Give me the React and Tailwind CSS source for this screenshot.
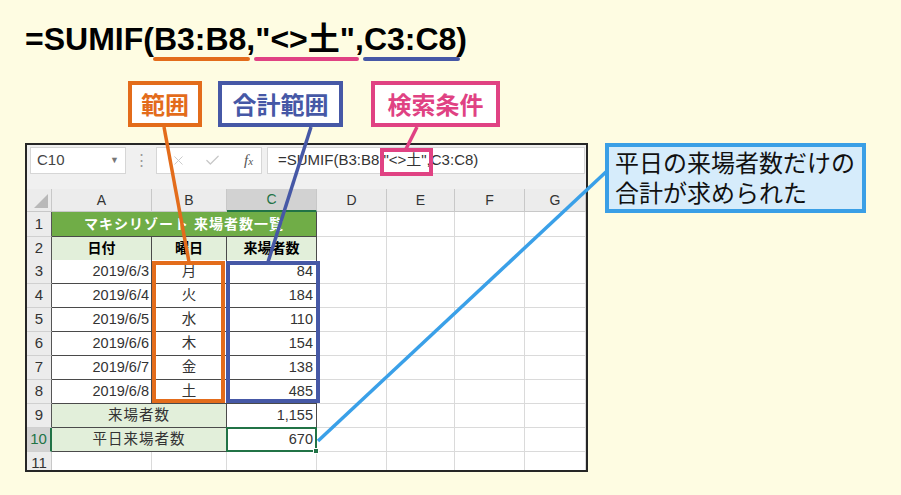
import React from 'react'
import { X, Check } from 'lucide-react'

const ORANGE = '#e36c1b'
const BLUE = '#4658a6'
const PINK = '#e04283'

const cols = 'grid grid-cols-[25px_100px_75px_90px_70px_68px_70px_1fr]'

const data = [
    { n: 3, date: '2019/6/3', day: '月', count: '84' },
    { n: 4, date: '2019/6/4', day: '火', count: '184' },
    { n: 5, date: '2019/6/5', day: '水', count: '110' },
    { n: 6, date: '2019/6/6', day: '木', count: '154' },
    { n: 7, date: '2019/6/7', day: '金', count: '138' },
    { n: 8, date: '2019/6/8', day: '土', count: '485' },
]

function RowHead({ children, active, table }) {
    return (
        <div
            className={`flex items-center justify-center text-[15px] border-b border-[#d0d0d0] ${
                active
                    ? 'bg-[#d2d2d2] text-[#217346] border-r-2 border-r-[#217346]'
                    : table
                    ? 'bg-[#ececec] text-[#333] border-r border-r-[#555]'
                    : 'bg-[#ececec] text-[#333] border-r border-r-[#c8c8c8]'
            }`}
        >
            {children}
        </div>
    )
}

function Blank() {
    return <div className="border-r border-b border-[#dadada] bg-white" />
}

function Blanks() {
    return (
        <>
            <Blank />
            <Blank />
            <Blank />
            <Blank />
        </>
    )
}

function Underlined({ color, children }) {
    return (
        <span className="relative inline-block">
            {children}
            <span className={`absolute -left-[1px] -right-[4px] top-[36px] h-[4px] rounded-full ${color}`} />
        </span>
    )
}

function Label({ children, className }) {
    return (
        <div
            className={`h-[46px] border-4 bg-white flex items-center justify-center text-[24px] font-bold leading-none font-['Noto_Sans_CJK_JP',sans-serif] ${className}`}
        >
            {children}
        </div>
    )
}

export default function App() {
    return (
        <div className="relative w-[901px] h-[495px] overflow-hidden bg-[#fefce2] font-['Liberation_Sans','Noto_Sans_CJK_JP',sans-serif]">
            {/* Formula title */}
            <div className="pt-[21px] pl-[25px] h-[57px] text-[32px] leading-[36px] font-bold text-black whitespace-nowrap">
                =SUMIF(
                <Underlined color="bg-[#e36c1b]">B3:B8</Underlined>,
                <Underlined color="bg-[#e04283]">"&lt;&gt;土"</Underlined>,
                <Underlined color="bg-[#4658a6]">C3:C8</Underlined>)
            </div>

            {/* Labels */}
            <div className="flex mt-[24px] ml-[128px]">
                <Label className="w-[74px] border-[#e36c1b] text-[#e36c1b]">範囲</Label>
                <Label className="w-[125px] ml-[16px] border-[#4658a6] text-[#4658a6]">合計範囲</Label>
                <Label className="w-[129px] ml-[28px] border-[#e04283] text-[#e04283]">検索条件</Label>
            </div>

            <div className="flex items-start mt-[16px]">
                {/* Sheet */}
                <div className="ml-[25px] w-[563px] h-[329px] border-2 border-[#262626] bg-white flex flex-col overflow-hidden">
                    {/* Formula bar */}
                    <div className="h-[44px] shrink-0 bg-[#f0f0f0] flex items-start pt-[2px] pl-[3px]">
                        <div className="w-[96px] h-[27px] bg-white border border-[#d6d6d6] flex items-center justify-between pl-[6px] pr-[6px] text-[15px] text-[#444]">
                            <span>C10</span>
                            <span className="text-[9px] text-[#777]">▼</span>
                        </div>
                        <div className="w-[30px] h-[27px] flex items-center justify-center text-[#999] text-[15px]">⋮</div>
                        <div className="w-[106px] h-[27px] bg-white border border-[#d6d6d6] flex items-center pl-[14px] text-[#c8c8c8]">
                            <X size={15} strokeWidth={1.5} />
                            <Check size={17} strokeWidth={1.8} className="ml-[18px]" />
                            <span className="ml-[23px] font-['Liberation_Serif',serif] italic text-[15px] text-[#555]">
                                f<span className="text-[11px]">x</span>
                            </span>
                        </div>
                        <div className="ml-[5px] w-[318px] h-[27px] bg-white border border-[#d6d6d6] flex items-center pl-[10px] text-[15px] text-[#333] whitespace-nowrap">
                            =SUMIF(B3:B8,"&lt;&gt;土",C3:C8)
                        </div>
                    </div>

                    {/* Column headers */}
                    <div className={`${cols} h-[23px] shrink-0 text-[14px] text-[#333]`}>
                        <div className="bg-[#ececec] border-r border-b border-[#c8c8c8] flex items-end justify-end pr-[3px] pb-[3px]">
                            <svg width="14" height="14" viewBox="0 0 14 14">
                                <polygon points="14,0 14,14 0,14" fill="#b9b9b9" />
                            </svg>
                        </div>
                        {['A', 'B'].map((c) => (
                            <div key={c} className="bg-[#ececec] border-r border-b border-[#c8c8c8] flex items-center justify-center">
                                {c}
                            </div>
                        ))}
                        <div className="bg-[#d2d2d2] border-r border-[#c8c8c8] border-b-2 border-b-[#217346] text-[#217346] flex items-center justify-center">
                            C
                        </div>
                        {['D', 'E', 'F', 'G'].map((c) => (
                            <div key={c} className="bg-[#ececec] border-r border-b border-[#c8c8c8] flex items-center justify-center">
                                {c}
                            </div>
                        ))}
                    </div>

                    {/* Row 1 */}
                    <div className={`${cols} h-[25px] shrink-0 text-[14px]`}>
                        <RowHead table>1</RowHead>
                        <div className="col-span-3 bg-[#70ad47] border-r border-b border-[#4a4a4a] flex items-center justify-center text-white font-bold tracking-[1px]">
                            マキシリゾート 来場者数一覧
                        </div>
                        <Blanks />
                    </div>

                    {/* Row 2 */}
                    <div className={`${cols} h-[23px] shrink-0 text-[14px]`}>
                        <RowHead table>2</RowHead>
                        {['日付', '曜日', '来場者数'].map((t) => (
                            <div key={t} className="bg-[#e2efda] border-r border-b border-[#4a4a4a] flex items-center justify-center font-bold text-black">
                                {t}
                            </div>
                        ))}
                        <Blanks />
                    </div>

                    {/* Data rows */}
                    {data.map((r) => (
                        <div key={r.n} className={`${cols} h-[24px] shrink-0 text-[14.5px] text-[#333]`}>
                            <RowHead table>{r.n}</RowHead>
                            <div className="bg-white border-r border-b border-[#4a4a4a] flex items-center justify-end pr-[2px]">{r.date}</div>
                            <div className="bg-white border-r border-b border-[#4a4a4a] flex items-center justify-center">{r.day}</div>
                            <div className="bg-white border-r border-b border-[#4a4a4a] flex items-center justify-end pr-[3px]">{r.count}</div>
                            <Blanks />
                        </div>
                    ))}

                    {/* Row 9 */}
                    <div className={`${cols} h-[24px] shrink-0 text-[14.5px] text-[#333]`}>
                        <RowHead table>9</RowHead>
                        <div className="col-span-2 bg-[#e2efda] border-r border-b border-[#4a4a4a] flex items-center justify-center tracking-[1px]">
                            来場者数
                        </div>
                        <div className="bg-white border-r border-b border-[#4a4a4a] flex items-center justify-end pr-[3px]">1,155</div>
                        <Blanks />
                    </div>

                    {/* Row 10 */}
                    <div className={`${cols} h-[24px] shrink-0 text-[14.5px] text-[#333]`}>
                        <RowHead active>10</RowHead>
                        <div className="col-span-2 bg-[#e2efda] border-r border-b border-[#4a4a4a] flex items-center justify-center tracking-[1px]">
                            平日来場者数
                        </div>
                        <div className="relative bg-white border-r border-b border-[#4a4a4a] flex items-center justify-end pr-[3px]">
                            670
                            <div className="absolute -inset-[1px] border-2 border-[#217346]" />
                            <div className="absolute -right-[3px] -bottom-[3px] w-[6px] h-[6px] bg-[#217346] border border-white" />
                        </div>
                        <Blanks />
                    </div>

                    {/* Row 11 */}
                    <div className={`${cols} h-[24px] shrink-0 text-[14.5px]`}>
                        <RowHead>11</RowHead>
                        <Blank />
                        <Blank />
                        <Blank />
                        <Blanks />
                    </div>
                </div>

                {/* Callout */}
                <div className="ml-[17px] w-[261px] h-[70px] border-4 border-[#3a9fe6] bg-[#d6ecfb] pl-[6px] text-[24px] leading-[30px] font-normal text-[#111] font-['Noto_Sans_CJK_JP',sans-serif] whitespace-nowrap">
                    <div>平日の来場者数だけの</div>
                    <div>合計が求められた</div>
                </div>
            </div>

            {/* Annotation lines and frames */}
            <svg className="absolute inset-0 pointer-events-none" width="901" height="495">
                <line x1="164" y1="127" x2="189" y2="262" stroke={ORANGE} strokeWidth="3.5" />
                <rect x="154" y="263" width="69" height="138" fill="none" stroke={ORANGE} strokeWidth="4" />
                <line x1="311" y1="127" x2="268" y2="262" stroke={BLUE} strokeWidth="3.5" />
                <rect x="228" y="263" width="90" height="138" fill="none" stroke={BLUE} strokeWidth="4" />
                <line x1="417" y1="127" x2="406" y2="149" stroke={PINK} strokeWidth="3.5" />
                <rect x="382" y="150" width="49" height="24" fill="none" stroke={PINK} strokeWidth="4" />
                <line x1="318" y1="441" x2="607" y2="171" stroke="#3aa0e8" strokeWidth="3.5" />
            </svg>
        </div>
    )
}
